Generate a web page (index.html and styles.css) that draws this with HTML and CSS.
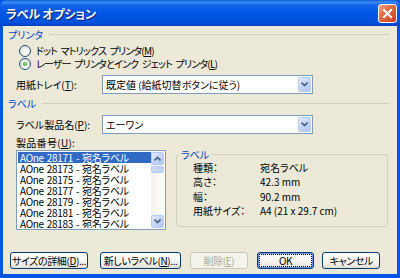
FILE: index.html
```html
<!DOCTYPE html>
<html lang="ja">
<head>
    <meta charset="UTF-8">
    <title>ラベル オプション</title>
    <link rel="stylesheet" href="styles.css">
</head>
<body>
    <div class="window">
        <div class="titlebar">
            <span class="title">ラベル オプション</span>
            <span class="close-btn">
                <svg width="11" height="11" viewBox="0 0 11 11"><path d="M2 2 L9 9 M9 2 L2 9" stroke="#fff" stroke-width="2.2" stroke-linecap="square"/></svg>
            </span>
        </div>

        <div class="client">
            <div class="section-head"><span>プリンタ</span><span class="rule"></span></div>

            <div class="radio-row first-radio"><span class="radio"></span>ドット マトリックス プリンタ(<u>M</u>)</div>
            <div class="radio-row"><span class="radio checked"></span>レーザー プリンタとインク ジェット プリンタ(<u>L</u>)</div>

            <div class="field-row">
                <span class="field-label">用紙トレイ(<u>T</u>):</span>
                <div class="combo">
                    <span class="combo-text">既定値 (給紙切替ボタンに従う)</span>
                    <span class="combo-btn"><svg width="7" height="5" viewBox="0 0 7 5"><path d="M0.5 0.5 L3.5 3.5 L6.5 0.5" fill="none" stroke="#4d6185" stroke-width="1.6"/></svg></span>
                </div>
            </div>

            <div class="section-head label-head"><span>ラベル</span><span class="rule"></span></div>

            <div class="field-row">
                <span class="field-label">ラベル製品名(<u>P</u>):</span>
                <div class="combo">
                    <span class="combo-text">エーワン</span>
                    <span class="combo-btn"><svg width="7" height="5" viewBox="0 0 7 5"><path d="M0.5 0.5 L3.5 3.5 L6.5 0.5" fill="none" stroke="#4d6185" stroke-width="1.6"/></svg></span>
                </div>
            </div>

            <div class="list-label">製品番号(<u>U</u>):</div>

            <div class="lower">
                <div class="listbox">
                    <div class="list-items">
                        <div class="list-item selected">AOne 28171 - 宛名ラベル</div>
                        <div class="list-item">AOne 28173 - 宛名ラベル</div>
                        <div class="list-item">AOne 28175 - 宛名ラベル</div>
                        <div class="list-item">AOne 28177 - 宛名ラベル</div>
                        <div class="list-item">AOne 28179 - 宛名ラベル</div>
                        <div class="list-item">AOne 28181 - 宛名ラベル</div>
                        <div class="list-item">AOne 28183 - 宛名ラベル</div>
                    </div>
                    <div class="scrollbar">
                        <span class="sb-btn"><svg width="7" height="5" viewBox="0 0 7 5"><path d="M0.5 4.5 L3.5 1.5 L6.5 4.5" fill="none" stroke="#4d6185" stroke-width="1.6"/></svg></span>
                        <span class="sb-thumb"></span>
                        <span class="sb-track"></span>
                        <span class="sb-btn"><svg width="7" height="5" viewBox="0 0 7 5"><path d="M0.5 0.5 L3.5 3.5 L6.5 0.5" fill="none" stroke="#4d6185" stroke-width="1.6"/></svg></span>
                    </div>
                </div>

                <fieldset class="groupbox">
                    <legend>ラベル</legend>
                    <div class="info-row"><span class="info-key">種類：</span><span>宛名ラベル</span></div>
                    <div class="info-row"><span class="info-key">高さ：</span><span>42.3 mm</span></div>
                    <div class="info-row"><span class="info-key">幅：</span><span>90.2 mm</span></div>
                    <div class="info-row"><span class="info-key">用紙サイズ：</span><span>A4 (21 x 29.7 cm)</span></div>
                </fieldset>
            </div>

            <div class="buttons">
                <button class="btn btn-size">サイズの詳細(<u>D</u>)...</button>
                <button class="btn btn-new">新しいラベル(<u>N</u>)...</button>
                <button class="btn btn-small" disabled>削除(<u>E</u>)</button>
                <button class="btn btn-small btn-default"><span class="focus">OK</span></button>
                <button class="btn btn-small">キャンセル</button>
            </div>
        </div>
    </div>
</body>
</html>
```

FILE: styles.css
```css
body {
    margin: 0;
    padding: 0;
    width: 400px;
    height: 278px;
    overflow: hidden;
    font-family: "Noto Sans CJK JP", sans-serif;
    font-size: 10px;
    font-feature-settings: "palt";
    color: #000;
}

u {
    text-decoration: underline;
    text-underline-offset: 1px;
}

.window {
    width: 400px;
    height: 278px;
    box-sizing: border-box;
    background-color: #0054e3;
    display: flex;
    flex-direction: column;
}

.titlebar {
    height: 26px;
    flex: none;
    display: flex;
    align-items: center;
    justify-content: space-between;
    padding: 0 3px 0 6px;
    background: linear-gradient(#0a5fd8 0%, #3d8bf5 8%, #0e62e8 22%, #0055e5 55%, #0053de 85%, #0040c4 100%);
    border-radius: 7px 7px 0 0;
}

.title {
    color: #fff;
    font-size: 12px;
    font-weight: bold;
    letter-spacing: -0.2px;
    text-shadow: 1px 1px 0 #0a1f6e;
}

.close-btn {
    width: 17px;
    height: 17px;
    display: flex;
    align-items: center;
    justify-content: center;
    background: linear-gradient(135deg, #f0a58c 0%, #e36a43 40%, #c8401b 100%);
    border: 1px solid #fff;
    border-radius: 3px;
}

.client {
    flex: 1;
    margin: 0 3px 4px 3px;
    background-color: #ece9d8;
    padding: 2px 8px 0 5px;
    display: flex;
    flex-direction: column;
}

.section-head {
    height: 13px;
    display: flex;
    align-items: center;
    color: #0046d5;
}

.section-head .rule {
    flex: 1;
    height: 1px;
    background-color: #d0d0bf;
    margin-left: 6px;
}

.label-head {
    margin-top: 3px;
}

.radio-row {
    height: 13px;
    display: flex;
    align-items: center;
    margin-left: 8px;
    letter-spacing: -0.8px;
    word-spacing: 2px;
}

.first-radio {
    margin-top: 3px;
}

.radio {
    width: 10px;
    height: 10px;
    border: 1px solid #1c5180;
    border-radius: 50%;
    background: radial-gradient(circle at 65% 65%, #fff 0%, #ebeae3 60%, #d6d3c6 100%);
    margin-right: 5px;
    margin-left: 3px;
    box-sizing: content-box;
    display: flex;
    align-items: center;
    justify-content: center;
}

.radio.checked::after {
    content: "";
    width: 4px;
    height: 4px;
    border-radius: 50%;
    background: radial-gradient(circle at 40% 40%, #7ee27e, #21a121);
}

.field-row {
    height: 19px;
    margin-top: 5px;
    margin-left: 8px;
    display: flex;
    align-items: center;
}

.field-label {
    width: 86px;
}

.combo {
    width: 211px;
    height: 19px;
    box-sizing: border-box;
    border: 1px solid #7f9db9;
    background-color: #fff;
    display: flex;
    align-items: center;
    padding: 1px;
}

.combo-text {
    flex: 1;
    padding-left: 2px;
    white-space: nowrap;
}

.combo-btn,
.sb-btn {
    width: 13px;
    height: 15px;
    box-sizing: border-box;
    border: 1px solid #b9cbf3;
    border-radius: 2px;
    background: linear-gradient(135deg, #e6eefc 0%, #c6d5fa 50%, #b3c8f6 100%);
    display: flex;
    align-items: center;
    justify-content: center;
}

.list-label {
    height: 13px;
    margin-top: 2px;
    margin-left: 8px;
    display: flex;
    align-items: center;
    letter-spacing: 0.3px;
}

.lower {
    display: flex;
    margin-top: 1px;
    margin-left: 8px;
}

.listbox {
    width: 150px;
    height: 80px;
    box-sizing: border-box;
    border: 1px solid #7f9db9;
    background-color: #fff;
    display: flex;
    padding: 1px;
}

.list-items {
    flex: 1;
    overflow: hidden;
}

.list-item {
    height: 11px;
    line-height: 11px;
    padding-left: 2px;
    white-space: nowrap;
    letter-spacing: -0.3px;
    word-spacing: 1px;
}

.list-item.selected {
    background-color: #316ac5;
    color: #fff;
}

.scrollbar {
    width: 13px;
    display: flex;
    flex-direction: column;
    background: linear-gradient(90deg, #f3f1ec, #fefefb);
}

.scrollbar .sb-btn {
    height: 13px;
}

.sb-thumb {
    height: 7px;
    margin-top: 1px;
    box-sizing: border-box;
    border: 1px solid #b9cbf3;
    border-radius: 2px;
    background: linear-gradient(90deg, #cddcfc, #bcd0fa);
}

.sb-track {
    flex: 1;
}

.groupbox {
    width: 212px;
    height: 78px;
    box-sizing: border-box;
    margin: -1px 0 0 10px;
    border: 1px solid #d0d0bf;
    border-radius: 3px;
    padding: 0 0 0 16px;
}

.groupbox legend {
    color: #0046d5;
    padding: 0 2px;
    margin-left: -14px;
    line-height: 11px;
}

.info-row {
    height: 14.5px;
    display: flex;
    align-items: center;
}

.info-key {
    width: 67px;
}

.buttons {
    display: flex;
    margin-top: 22px;
    margin-left: 2px;
}

.btn {
    height: 17px;
    box-sizing: border-box;
    border: 1px solid #003c74;
    border-radius: 3px;
    background: linear-gradient(#ffffff 0%, #f4f3ee 60%, #e3e1d7 100%);
    font-family: "Noto Sans CJK JP", sans-serif;
    font-feature-settings: "palt";
    font-size: 10px;
    letter-spacing: -0.4px;
    white-space: nowrap;
    color: #000;
    padding: 0;
    margin-right: 9px;
    display: flex;
    align-items: center;
    justify-content: center;
}

.btn-size {
    width: 80px;
    margin-right: 12px;
}

.btn-new {
    width: 83px;
}

.btn-small {
    width: 59px;
}

.btn[disabled] {
    border-color: #c9c7ba;
    color: #aca899;
    background: #f5f4ea;
}

.btn-default {
    box-shadow: inset 0 0 0 1px #6a8ce8;
    margin-right: 8px;
}

.btn-default .focus {
    border: 1px dotted #000;
    width: 51px;
    height: 11px;
    line-height: 11px;
    text-align: center;
}
```
